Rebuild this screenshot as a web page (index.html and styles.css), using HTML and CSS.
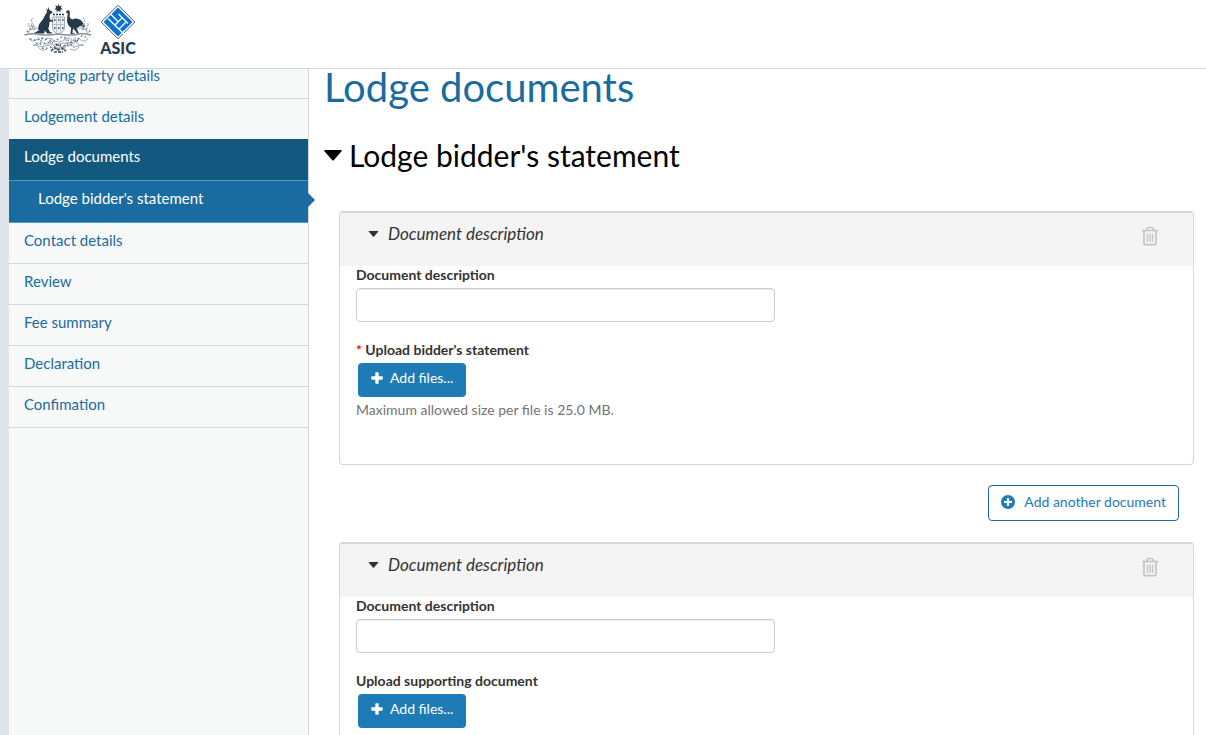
FILE: index.html
```html
<!DOCTYPE html>
<html lang="en">
<head>
    <meta charset="UTF-8">
    <meta name="viewport" content="width=device-width, initial-scale=1.0">
    <title>Lodge documents</title>
    <link rel="stylesheet" href="styles.css">
</head>
<body>
    <!-- shared icons -->
    <svg class="icon-defs" aria-hidden="true">
        <symbol id="icon-caret" viewBox="0 0 18 11">
            <path d="M1 0h16q1.500 0 .5 1.300L10 10q-1 1-2 0L.5 1.300Q-.5 0 1 0z" fill="currentColor"/>
        </symbol>
        <symbol id="icon-plus" viewBox="0 0 12 12">
            <path d="M4.300 1q0-.7.700-.7h2q.7 0 .7.700v3.300H11q.7 0 .7.700v2q0 .7-.7.700H7.700V11q0 .7-.7.700H5q-.7 0-.7-.7V7.700H1q-.7 0-.7-.7V5q0-.7.700-.7h3.300z" fill="currentColor"/>
        </symbol>
        <symbol id="icon-plus-circle" viewBox="0 0 14 14">
            <circle cx="7" cy="7" r="7" fill="currentColor"/>
            <path d="M7 3v8M3 7h8" stroke="#fff" stroke-width="2.200"/>
        </symbol>
        <symbol id="icon-trash" viewBox="0 0 18 20">
            <path d="M1 4.500h16M6 4V3q0-1.500 1.500-1.500h3Q12 1.500 12 3v1M3 4.500V17q0 1.700 1.700 1.700h8.600Q15 18.700 15 17V4.500" fill="none" stroke="currentColor" stroke-width="1.700"/>
            <path d="M6.500 7.500v8.500M9 7.500v8.500M11.500 7.500v8.500" stroke="currentColor" stroke-width="1.300"/>
        </symbol>
    </svg>

    <header class="header">
        <svg class="crest" viewBox="0 0 72 54" role="img" aria-label="Australian Government coat of arms">
            <path d="M36.500 2l1 2.200 2.300-.6-1 2.200 1.800 1.400-2.300.6.100 2.400-1.900-1.500-1.900 1.500.1-2.400-2.300-.6 1.800-1.400-1-2.200 2.300.6z" fill="#26394b"/>
            <path d="M31 12.500h11" stroke="#26394b" stroke-width="1.500" stroke-dasharray="2 1"/>
            <path d="M30.500 15h12v10q0 5-6 7-6-2-6-7z" fill="#eef0f2" stroke="#8c96a0" stroke-width=".8"/>
            <path d="M34.500 15v15M38.500 15v15M30.500 22.500h12" stroke="#a3acb5" stroke-width=".7"/>
            <path d="M32 18h1.500M36 18h1.500M40 18h1.500M32 26h1.500M36 26h1.500M40 26h1.500" stroke="#5d6c7b" stroke-width="1.800"/>
            <!-- kangaroo -->
            <path d="M25 10l-.6-4 1.600 2 .3-3 1.300 3 2.400 1.500.7 1.500-2.700.9-.4 3 .4 2.500 3.300.8-.2 1.200-3.600.3-.2 3.800-1 2.800 1.300 3.300 2.600 1.200v.8h-5l-2.400-3-.6 3h-6.500q-4 .7-6.500-.2 4.500-.3 7-2.700-.6-5 2.400-8.500 3-3.300 4.200-6.500z" fill="#26394b"/>
            <!-- emu -->
            <path d="M43.700 10.600l1.500-2.100q1.700-.9 2.500.8.500 2.500-.2 5 .3 2.500 2.600 3.200 4.500-2.300 8.500.6 3.500 2.500 3.500 8-2.300-2.300-4.300-2.100-1.300 2-3.200 2.300l2.500 5.200h-1.800L51 26.200l-.6 5.100h2v.7h-4l.8-6.200q-3.800-2.500-4.200-7 0-3.500.9-7.600z" fill="#26394b"/>
            <path d="M2.500 33q7-2 15-.6 9 1.300 18.500-.4 10 1.700 18 .4 8-1.300 15 .6" fill="none" stroke="#8490a0" stroke-width="1.500"/>
            <!-- wattle -->
            <g fill="none" stroke="#a0aab4" stroke-width="1">
                <path d="M6 31q1-4 5-4-3-3-1-6 3 2 2 5 4-1 5 3M10 20q-2-3 1-4M8 25q-2-2-1-4M66 31q-1-4-5-4 3-3 1-6-3 2-2 5-4-1-5 3M62 20q2-3-1-4M65 25q2-2 1-4"/>
                <path d="M7 36q3 5 7 2t5 2q-4 5-8 3M20 35q-2 6 4 7t5-5q-5-3-6 2M12 42q6 4 11 2t8 3M66 36q-3 5-7 2t-5 2q4 5 8 3M53 35q2 6-4 7t-5-5q5-3 6 2M61 42q-6 4-11 2t-8 3"/>
                <path d="M29 36q3 4 7.500 4T44 36M28 42q4 2 8.500 0t8.500 0M30 47q3-4 6.500-1 3.500-3 6.500 1M16 45q4 5 9 2M57 45q-4 5-9 2"/>
            </g>
            <g fill="none" stroke="#66758a" stroke-width="1.500" stroke-dasharray="1.500 2.500">
                <path d="M5 30q4-6 8-2M10 24l3 3M68 30q-4-6-8-2M63 24l-3 3"/>
                <path d="M8 37q5 2 9 0t9 1 10-1 10 1 10-1 9 0M14 41q5 2 10 0t12 2 12-2 10 0M20 46q6 1 10-1t6 3 6-3 10 1"/>
            </g>
            <path d="M29 49l4-3 3 2 4-2 4 3M32 50h9M34 43h5" fill="none" stroke="#3c4e60" stroke-width="1.600" stroke-dasharray="3 1"/>
        </svg>
        <div class="asic">
            <svg class="asic-mark" viewBox="0 0 36 36" aria-hidden="true">
                <path d="M18 1.200L34.800 18 18 34.800 1.200 18z" fill="#fff" stroke="#4b5c6c" stroke-width="1"/>
                <path d="M18 3.500L32.500 18 18 32.500 3.500 18z" fill="#0a73d1"/>
                <path d="M11 10.500l7.500 7.500M14.500 21.500L22.500 13.500M8 14.500L25 31M18.500 10l9.500 9.500M19 25l6.500-6.500" fill="none" stroke="#fff" stroke-width="1.300"/>
            </svg>
            <span class="asic-name">ASIC</span>
        </div>
    </header>

    <div class="layout">
        <nav class="sidebar">
            <ul>
                <li><a href="#">Lodging party details</a></li>
                <li><a href="#">Lodgement details</a></li>
                <li class="active"><a href="#">Lodge documents</a></li>
                <li class="active-sub"><a href="#">Lodge bidder's statement</a></li>
                <li><a href="#">Contact details</a></li>
                <li><a href="#">Review</a></li>
                <li><a href="#">Fee summary</a></li>
                <li><a href="#">Declaration</a></li>
                <li><a href="#">Confimation</a></li>
            </ul>
        </nav>

        <main class="content">
            <h1>Lodge documents</h1>
            <h2><svg class="caret-lg"><use href="#icon-caret"/></svg>Lodge bidder's statement</h2>

            <section class="card">
                <div class="card-header">
                    <svg class="caret-sm"><use href="#icon-caret"/></svg>
                    <em>Document description</em>
                    <button type="button" class="btn-trash" aria-label="Remove document"><svg><use href="#icon-trash"/></svg></button>
                </div>
                <div class="card-body">
                    <label for="description-1">Document description</label>
                    <input type="text" id="description-1">
                    <label for="files-1"><span class="required">*</span> Upload bidder's statement</label>
                    <button type="button" class="btn-add" id="files-1"><svg><use href="#icon-plus"/></svg>Add files...</button>
                    <p class="help">Maximum allowed size per file is 25.0 MB.</p>
                </div>
            </section>

            <div class="actions">
                <button type="button" class="btn-outline"><svg><use href="#icon-plus-circle"/></svg>Add another document</button>
            </div>

            <section class="card">
                <div class="card-header">
                    <svg class="caret-sm"><use href="#icon-caret"/></svg>
                    <em>Document description</em>
                    <button type="button" class="btn-trash" aria-label="Remove document"><svg><use href="#icon-trash"/></svg></button>
                </div>
                <div class="card-body">
                    <label for="description-2">Document description</label>
                    <input type="text" id="description-2">
                    <label for="files-2">Upload supporting document</label>
                    <button type="button" class="btn-add" id="files-2"><svg><use href="#icon-plus"/></svg>Add files...</button>
                </div>
            </section>
        </main>
    </div>
</body>
</html>
```
FILE: styles.css
```css
* {
    box-sizing: border-box;
}
body {
    margin: 0;
    height: 100vh;
    display: flex;
    flex-direction: column;
    overflow: hidden;
    font-family: Lato, sans-serif;
    font-size: 14px;
    line-height: 20px;
    color: #333;
    background-color: #fff;
}
button, input {
    font: inherit;
}
.icon-defs {
    display: none;
}
.header {
    flex: none;
    display: flex;
    align-items: flex-start;
    gap: 6px;
    height: 69px;
    padding: 2px 22px;
    border-bottom: 1px solid #d6d8d8;
}
.crest {
    width: 72px;
    height: 54px;
}
.asic {
    display: flex;
    flex-direction: column;
    align-items: center;
    padding-top: 2px;
}
.asic-mark {
    width: 36px;
    height: 36px;
}
.asic-name {
    font-size: 16px;
    font-weight: 900;
    line-height: 16px;
    color: #26394b;
}
.layout {
    flex: 1;
    display: flex;
    min-height: 0;
}
.sidebar {
    flex: none;
    width: 309px;
    background-color: #f7f9f8;
    border-left: 9px solid #dfe5ea;
    border-right: 1px solid #d6d8d8;
}
/* the first item is scrolled partly under the header */
.sidebar ul {
    list-style: none;
    margin: -11px 0 0;
    padding: 0;
}
.sidebar li {
    position: relative;
    border-bottom: 1px solid #d6d8d8;
}
.sidebar a {
    display: block;
    padding: 7px 15px 13px;
    font-size: 15px;
    color: #1a6b9f;
    text-decoration: none;
}
.sidebar .active {
    margin-top: -1px;
    background-color: #13587f;
    border-color: #4c9ac6;
}
.sidebar .active-sub {
    background-color: #1a6b9f;
    border-color: #4c9ac6;
}
.sidebar .active a,
.sidebar .active-sub a {
    padding-bottom: 14px;
    color: #fff;
}
.sidebar .active-sub a {
    padding-left: 29px;
}
.sidebar .active-sub::after {
    content: "";
    position: absolute;
    left: 100%;
    top: 12px;
    border: 7px solid transparent;
    border-left-color: #1a6b9f;
    border-right: 0;
}
.content {
    flex: 1;
    min-width: 0;
    padding: 0 12px 0 15px;
}
h1, h2 {
    margin: 0;
    font-weight: 400;
}
h1 {
    font-size: 40px;
    line-height: 36px;
    color: #1a6b9f;
}
h2 {
    display: flex;
    align-items: center;
    gap: 7px;
    margin: 30px 0 36px;
    font-size: 30px;
    line-height: 40px;
    color: #000;
}
.caret-lg {
    width: 18px;
    height: 11px;
}
.caret-sm {
    width: 11px;
    height: 6px;
}
.card {
    margin-left: 15px;
    border: 1px solid #d6d8d8;
    border-top-width: 2px;
    border-radius: 4px;
}
.card-header {
    display: flex;
    align-items: center;
    gap: 9px;
    padding: 9px 34px 20px 28px;
    font-size: 17px;
    line-height: 24px;
    background-color: #f4f4f4;
}
.btn-trash {
    height: 24px;
    margin-left: auto;
    padding: 4px 0 0;
    border: 0;
    background: none;
    color: #c4c4c4;
    cursor: pointer;
}
.btn-trash svg {
    display: block;
    width: 18px;
    height: 20px;
}
.card-body {
    padding: 0 0 44px 16px;
}
.card-body label {
    display: block;
    margin-bottom: 4px;
    font-weight: 700;
    line-height: 18px;
}
.card-body input {
    display: block;
    width: 50%;
    height: 34px;
    margin-bottom: 19px;
    padding: 6px 12px;
    border: 1px solid #ccc;
    border-radius: 4px;
    box-shadow: inset 0 1px 1px rgba(0, 0, 0, 0.08);
}
.required {
    color: #f00;
}
.btn-add,
.btn-outline {
    display: flex;
    align-items: center;
    border-radius: 4px;
    cursor: pointer;
}
.btn-add {
    gap: 7px;
    height: 34px;
    margin-left: 2px;
    padding: 0 13px 4px;
    border: 0;
    background-color: #1f7bb6;
    color: #fff;
}
.btn-add svg {
    width: 12px;
    height: 12px;
}
.help {
    margin: 3px 0 0;
    color: #737373;
}
.actions {
    display: flex;
    justify-content: flex-end;
    padding: 20px 15px 21px;
}
.btn-outline {
    gap: 9px;
    height: 36px;
    padding: 0 12px 2px;
    border: 1px solid #1a6b9f;
    background-color: #fff;
    color: #1f7bb6;
}
.btn-outline svg {
    width: 14px;
    height: 14px;
}
```
